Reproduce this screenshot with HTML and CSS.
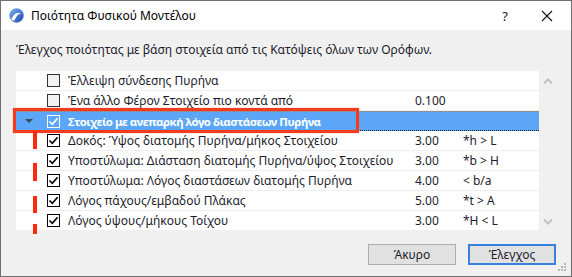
FILE: index.html
```html
<!DOCTYPE html>
<html lang="el">
<head>
    <meta charset="UTF-8">
    <title>Ποιότητα Φυσικού Μοντέλου</title>
    <link rel="stylesheet" href="styles.css">
</head>
<body>

    <div class="window">

        <!-- Title bar -->
        <div class="titlebar">
            <svg class="app-icon" width="15" height="15" viewBox="0 0 15 15">
                <defs>
                    <linearGradient id="logo-grad" x1="0" y1="0" x2="1" y2="1">
                        <stop offset="0" stop-color="#7fb2f0"/>
                        <stop offset="1" stop-color="#1747b0"/>
                    </linearGradient>
                </defs>
                <circle cx="7.5" cy="7.5" r="7.2" fill="url(#logo-grad)"/>
                <path d="M2.2 12.2 C4 6 8.5 3.2 12.6 5.6 C11 5.2 7.6 6.6 5.6 12.6 Z" fill="#fff"/>
            </svg>
            <span class="title">Ποιότητα Φυσικού Μοντέλου</span>
            <span class="title-help">?</span>
            <svg class="title-close" width="12" height="12" viewBox="0 0 12 12">
                <path d="M1 1 L11 11 M11 1 L1 11" stroke="#111" stroke-width="1.1"/>
            </svg>
        </div>

        <!-- Dialog content -->
        <div class="dialog-body">
            <p class="description">Έλεγχος ποιότητας με βάση στοιχεία από τις Κατόψεις όλων των Ορόφων.</p>

            <div class="list-wrap">
                <div class="list">
                    <div class="row">
                        <span class="toggle"></span>
                        <span class="check"></span>
                        <span class="name">Έλλειψη σύνδεσης Πυρήνα</span>
                        <span class="value"></span>
                        <span class="op"></span>
                    </div>
                    <div class="row">
                        <span class="toggle"></span>
                        <span class="check"></span>
                        <span class="name">Ένα άλλο Φέρον Στοιχείο πιο κοντά από</span>
                        <span class="value">0.100</span>
                        <span class="op"></span>
                    </div>
                    <div class="row selected">
                        <span class="toggle"><span class="arrow-down"></span></span>
                        <span class="check checked">
                            <svg width="11" height="11" viewBox="0 0 11 11"><path d="M1.5 5.5 L4.3 8.3 L9.6 2.2" fill="none" stroke="#fff" stroke-width="1.7"/></svg>
                        </span>
                        <span class="name">Στοιχείο με ανεπαρκή λόγο διαστάσεων Πυρήνα</span>
                        <span class="value"></span>
                        <span class="op"></span>
                    </div>
                    <div class="row">
                        <span class="toggle"></span>
                        <span class="check checked">
                            <svg width="11" height="11" viewBox="0 0 11 11"><path d="M1.5 5.5 L4.3 8.3 L9.6 2.2" fill="none" stroke="#000" stroke-width="1.7"/></svg>
                        </span>
                        <span class="name">Δοκός: Ύψος διατομής Πυρήνα/μήκος Στοιχείου</span>
                        <span class="value">3.00</span>
                        <span class="op">*h &gt; L</span>
                    </div>
                    <div class="row">
                        <span class="toggle"></span>
                        <span class="check checked">
                            <svg width="11" height="11" viewBox="0 0 11 11"><path d="M1.5 5.5 L4.3 8.3 L9.6 2.2" fill="none" stroke="#000" stroke-width="1.7"/></svg>
                        </span>
                        <span class="name">Υποστύλωμα: Διάσταση διατομής Πυρήνα/ύψος Στοιχείου</span>
                        <span class="value">3.00</span>
                        <span class="op">*b &gt; H</span>
                    </div>
                    <div class="row">
                        <span class="toggle"></span>
                        <span class="check checked">
                            <svg width="11" height="11" viewBox="0 0 11 11"><path d="M1.5 5.5 L4.3 8.3 L9.6 2.2" fill="none" stroke="#000" stroke-width="1.7"/></svg>
                        </span>
                        <span class="name">Υποστύλωμα: Λόγος διαστάσεων διατομής Πυρήνα</span>
                        <span class="value">4.00</span>
                        <span class="op">&lt; b/a</span>
                    </div>
                    <div class="row">
                        <span class="toggle"></span>
                        <span class="check checked">
                            <svg width="11" height="11" viewBox="0 0 11 11"><path d="M1.5 5.5 L4.3 8.3 L9.6 2.2" fill="none" stroke="#000" stroke-width="1.7"/></svg>
                        </span>
                        <span class="name">Λόγος πάχους/εμβαδού Πλάκας</span>
                        <span class="value">5.00</span>
                        <span class="op">*t &gt; A</span>
                    </div>
                    <div class="row">
                        <span class="toggle"></span>
                        <span class="check checked">
                            <svg width="11" height="11" viewBox="0 0 11 11"><path d="M1.5 5.5 L4.3 8.3 L9.6 2.2" fill="none" stroke="#000" stroke-width="1.7"/></svg>
                        </span>
                        <span class="name">Λόγος ύψους/μήκους Τοίχου</span>
                        <span class="value">3.00</span>
                        <span class="op">*H &lt; L</span>
                    </div>

                    <!-- Annotations -->
                    <div class="highlight-box"></div>
                    <div class="dash-line"></div>
                </div>

                <div class="scrollbar">
                    <svg width="10" height="6" viewBox="0 0 10 6"><path d="M1 5.5 L5 1.5 L9 5.5" fill="none" stroke="#c2c2c2" stroke-width="2"/></svg>
                    <svg width="10" height="6" viewBox="0 0 10 6"><path d="M1 0.5 L5 4.5 L9 0.5" fill="none" stroke="#c2c2c2" stroke-width="2"/></svg>
                </div>
            </div>

            <div class="buttons">
                <button class="btn">Άκυρο</button>
                <button class="btn btn-default">Έλεγχος</button>
            </div>
        </div>

        <svg class="grip" width="9" height="9" viewBox="0 0 9 9">
            <rect x="6" y="0" width="2" height="2" fill="#b8b8b8"/>
            <rect x="3" y="3" width="2" height="2" fill="#b8b8b8"/>
            <rect x="6" y="3" width="2" height="2" fill="#b8b8b8"/>
            <rect x="0" y="6" width="2" height="2" fill="#b8b8b8"/>
            <rect x="3" y="6" width="2" height="2" fill="#b8b8b8"/>
            <rect x="6" y="6" width="2" height="2" fill="#b8b8b8"/>
        </svg>
    </div>

</body>
</html>
```

FILE: styles.css
```css
/* Global */
body {
    margin: 0;
    padding: 0;
    font-family: 'Noto Sans', 'Open Sans', sans-serif;
    font-size: 12px;
    color: #1c1c2c;
    background: #fff;
}

.window {
    position: relative;
    width: 572px;
    height: 277px;
    box-sizing: border-box;
    border: 1px solid #707070;
    background: #f0f0f0;
    display: flex;
    flex-direction: column;
}

/* Title bar */
.titlebar {
    height: 29px;
    background: #fff;
    display: flex;
    align-items: center;
    padding-left: 8px;
    padding-right: 18px;
    flex-shrink: 0;
}

.app-icon {
    margin-right: 7px;
}

.title {
    font-size: 12px;
    color: #000;
    flex: 1;
}

.title-help {
    font-size: 13px;
    color: #111;
    margin-right: 33px;
}

/* Dialog */
.dialog-body {
    flex: 1;
    padding: 12px 15px 0 15px;
    display: flex;
    flex-direction: column;
}

.description {
    margin: 0;
    line-height: 16px;
    height: 16px;
}

.list-wrap {
    display: flex;
    margin-top: 13px;
}

.list {
    position: relative;
    width: 523px;
    height: 159px;
    background: #fff;
}

.row {
    display: flex;
    align-items: center;
    height: 20px;
    box-sizing: border-box;
    border-bottom: 1px solid #efefef;
    white-space: nowrap;
}

.row:last-of-type {
    border-bottom: none;
}

.toggle {
    width: 31px;
    height: 20px;
    display: flex;
    align-items: center;
    padding-left: 9px;
    box-sizing: border-box;
}

.arrow-down {
    width: 0;
    height: 0;
    border-left: 4px solid transparent;
    border-right: 4px solid transparent;
    border-top: 4px solid #3b4a5c;
}

.check {
    width: 13px;
    height: 13px;
    box-sizing: border-box;
    border: 1px solid #333;
    background: #f2f2f2;
    margin-right: 8px;
    display: flex;
    align-items: center;
    justify-content: center;
    flex-shrink: 0;
}

.check.checked {
    background: #fff;
    border-color: #000;
}

.name {
    width: 347px;
    overflow: hidden;
}

.value {
    width: 48px;
}

.op {
    flex: 1;
}

/* Selected row */
.row.selected {
    background: #5ba6f6;
    color: #fff;
    border-top: 1px dotted #c9783a;
    border-bottom: 1px dotted #222;
}

.row.selected .name {
    font-weight: bold;
    font-size: 11.4px;
    letter-spacing: -0.45px;
}

.row.selected .check {
    background: transparent;
    border-color: #fff;
}

/* Red annotations */
.highlight-box {
    position: absolute;
    left: -3px;
    top: 37px;
    width: 346px;
    height: 25px;
    box-sizing: border-box;
    border: 3px solid #f23a1c;
    box-shadow: 0 0 1px #f77;
}

.dash-line {
    position: absolute;
    left: 17px;
    top: 60px;
    width: 4px;
    height: 103px;
    background: linear-gradient(to bottom,
        #ff2a0c 0, #ff2a0c 18px, transparent 18px,
        transparent 32px, #ff2a0c 32px, #ff2a0c 50px, transparent 50px,
        transparent 65px, #ff2a0c 65px, #ff2a0c 82px, transparent 82px,
        transparent 93px, #ff2a0c 93px, #ff2a0c 103px);
}

/* Scrollbar */
.scrollbar {
    width: 17px;
    display: flex;
    flex-direction: column;
    justify-content: space-between;
    align-items: center;
    padding: 7px 0 5px 0;
    box-sizing: border-box;
}

/* Buttons */
.buttons {
    display: flex;
    justify-content: flex-end;
    gap: 12px;
    margin-top: 14px;
}

.btn {
    width: 88px;
    height: 21px;
    box-sizing: border-box;
    border: 1px solid #adadad;
    background: #e1e1e1;
    font-family: 'Noto Sans', 'Open Sans', sans-serif;
    font-size: 12px;
    color: #1c1c2c;
    padding: 0;
}

.btn-default {
    border: 2px solid #3a80d8;
}

.grip {
    position: absolute;
    right: 4px;
    bottom: 4px;
}
```
